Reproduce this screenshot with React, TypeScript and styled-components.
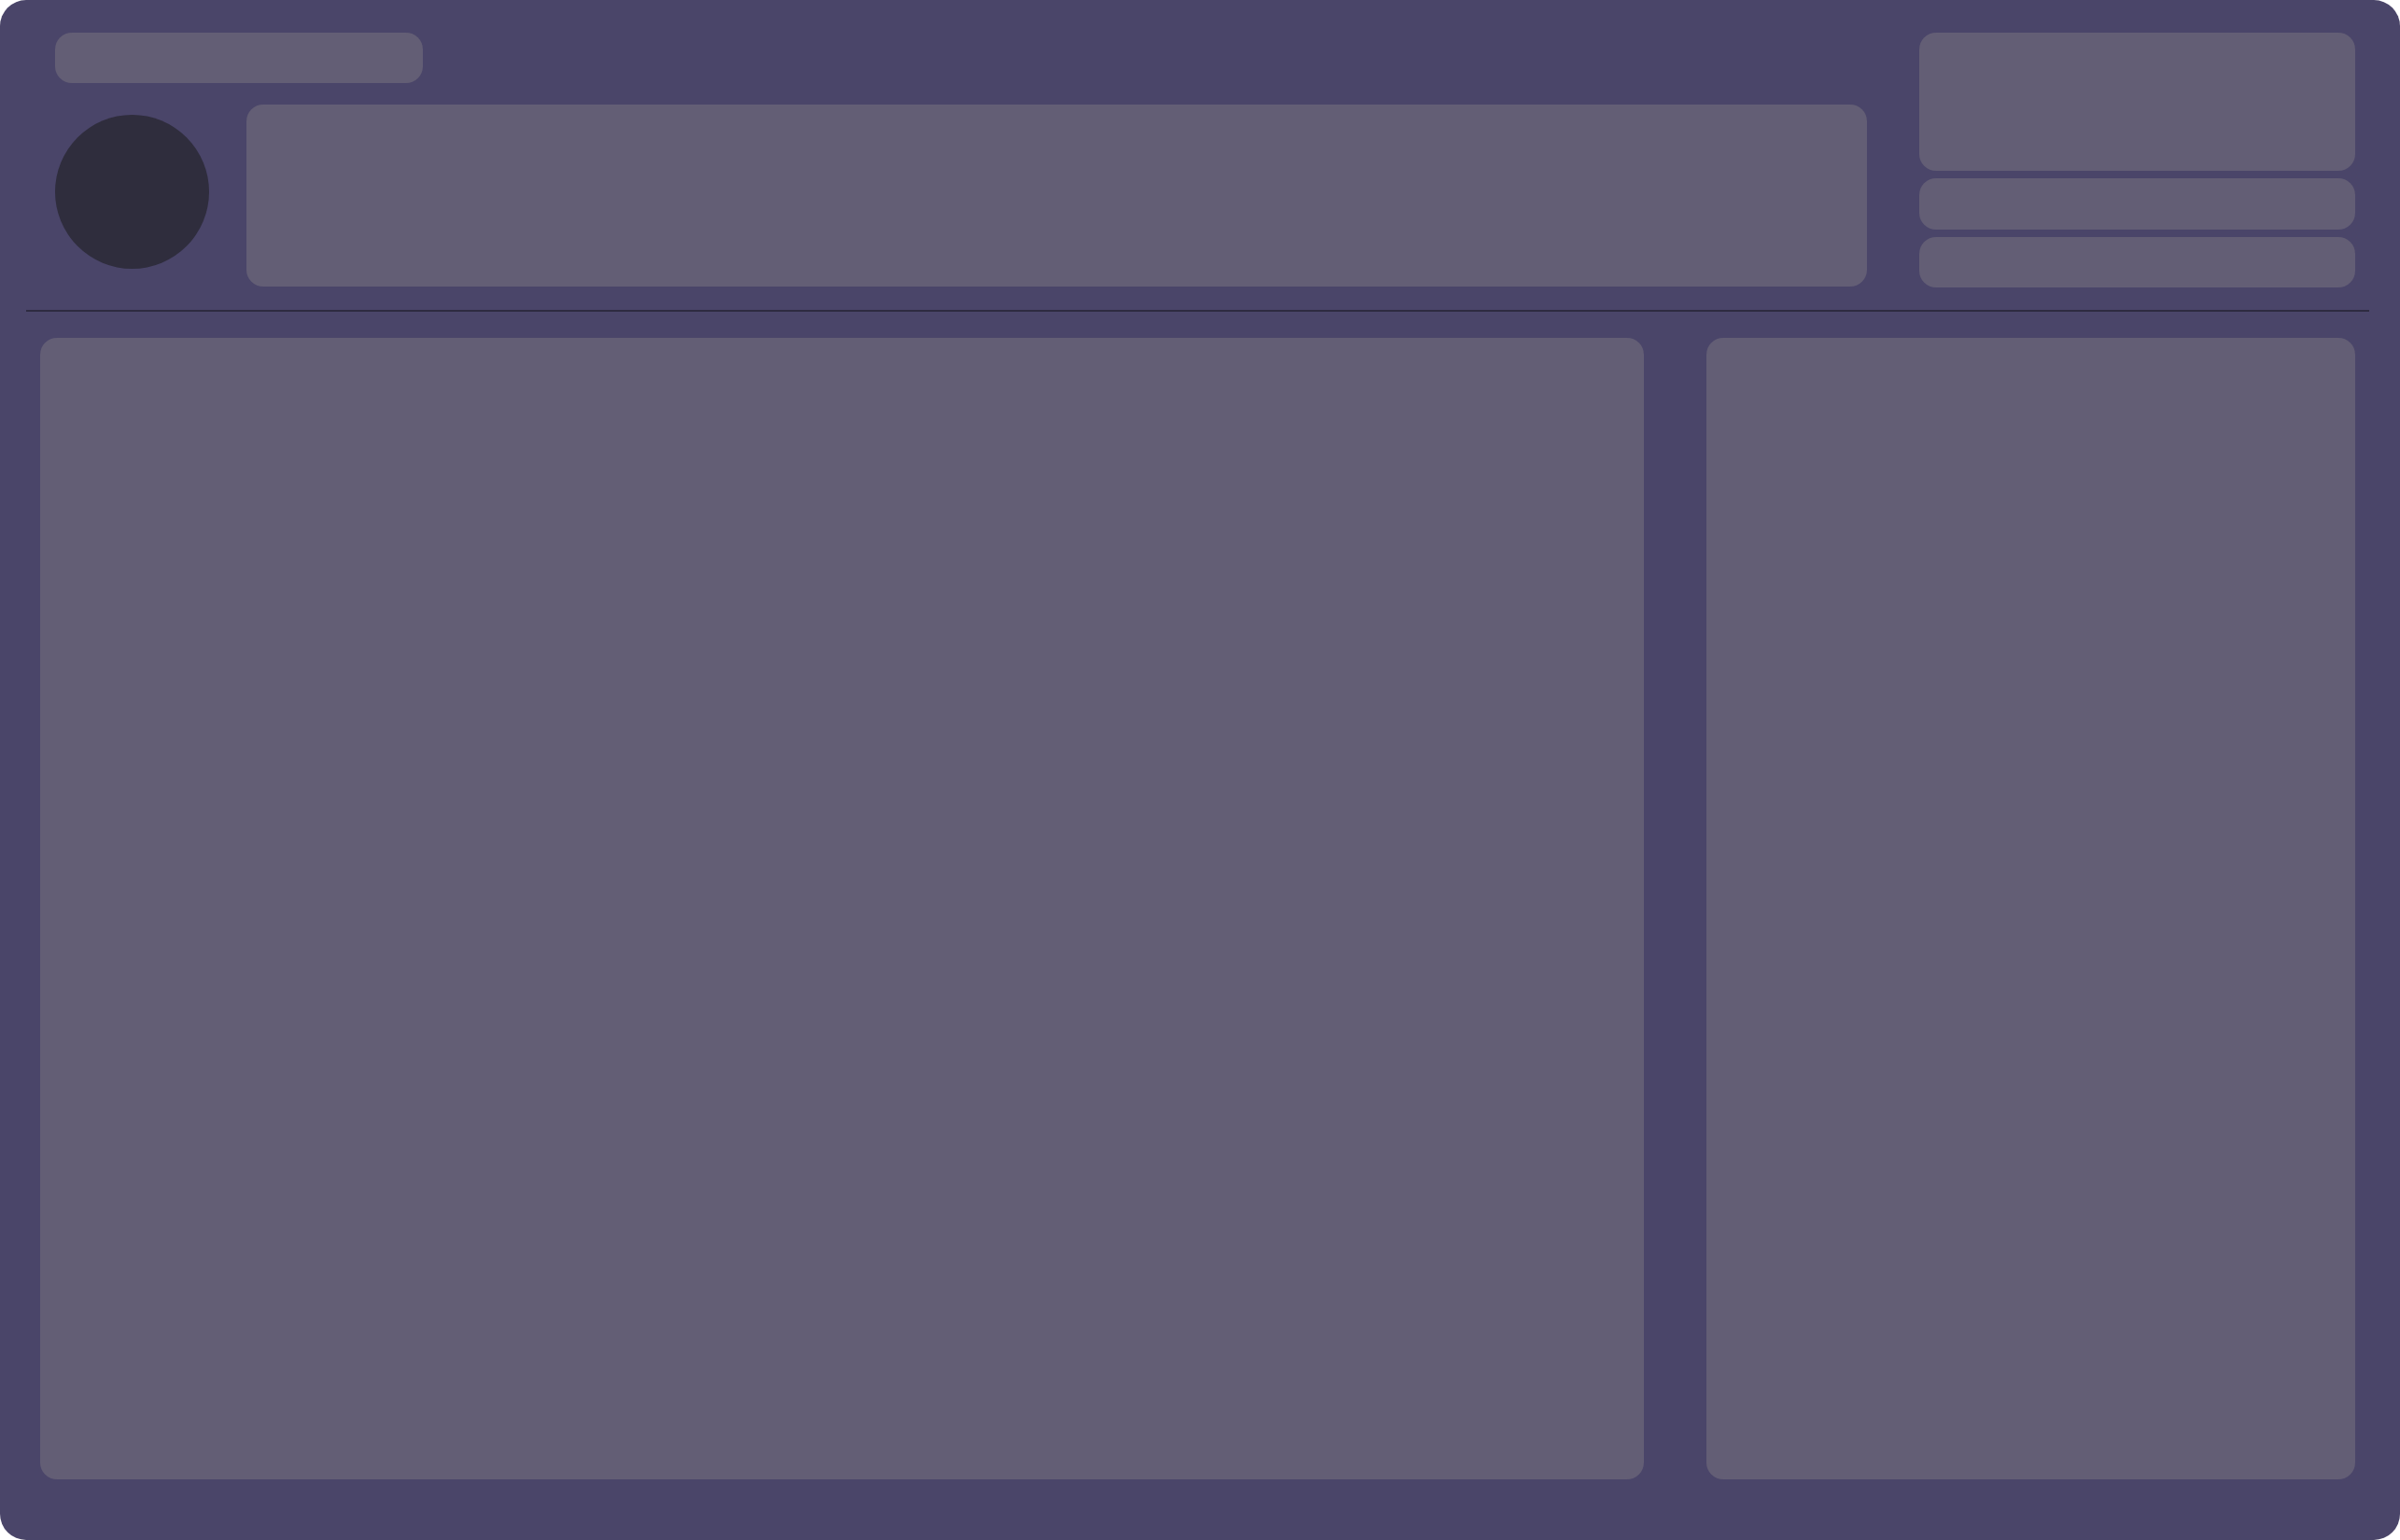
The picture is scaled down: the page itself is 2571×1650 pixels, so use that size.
import React from "react";
import styled, { createGlobalStyle } from "styled-components";

const Global = createGlobalStyle`
  html, body { margin: 0; padding: 0; background: #ffffff; }
  body { font-family: "Liberation Sans", Arial, sans-serif; }
  * { box-sizing: border-box; }
`;

const Frame = styled.div`
  width: 2571px;
  height: 1650px;
  background: #4a4569;
  border-radius: 28px;
  display: flex;
  flex-direction: column;
  overflow: hidden;
`;

const Header = styled.header`
  display: flex;
  align-items: flex-start;
  gap: 56px;
  padding: 35px 48px 0 59px;
`;

const HeaderMain = styled.div`
  width: 1941px;
  display: flex;
  flex-direction: column;
  gap: 23px;
`;

const Block = styled.div<{ $w?: number; $h: number }>`
  background: #635e75;
  border-radius: 18px;
  height: ${(p) => p.$h}px;
  ${(p) => (p.$w ? `width: ${p.$w}px;` : "")}
`;

const ProfileRow = styled.div`
  display: flex;
  align-items: flex-start;
  gap: 40px;
  height: 195px;
`;

const Avatar = styled.div`
  width: 165px;
  height: 165px;
  margin-top: 11px;
  border-radius: 50%;
  background: #2f2d3d;
  flex: none;
`;

const Banner = styled(Block)`
  flex: 1;
`;

const SideStack = styled.div`
  width: 467px;
  display: flex;
  flex-direction: column;
  gap: 8px;
`;

const Divider = styled.hr`
  border: none;
  height: 2px;
  background: #2e2b41;
  margin: 24px 33px 0 28px;
`;

const Panels = styled.main`
  display: grid;
  grid-template-columns: 1718px 695px;
  gap: 67px;
  padding: 0 48px 0 43px;
  margin-top: 28px;
  height: 1223px;
`;

const Panel = styled.section`
  background: #635e75;
  border-radius: 18px;
`;

export default function App() {
  return (
    <>
      <Global />
      <Frame>
        <Header>
          <HeaderMain>
            <Block $w={394} $h={54} />
            <ProfileRow>
              <Avatar />
              <Banner $h={195} />
            </ProfileRow>
          </HeaderMain>
          <SideStack>
            <Block $h={148} />
            <Block $h={55} />
            <Block $h={54} />
          </SideStack>
        </Header>
        <Divider />
        <Panels>
          <Panel />
          <Panel />
        </Panels>
      </Frame>
    </>
  );
}
